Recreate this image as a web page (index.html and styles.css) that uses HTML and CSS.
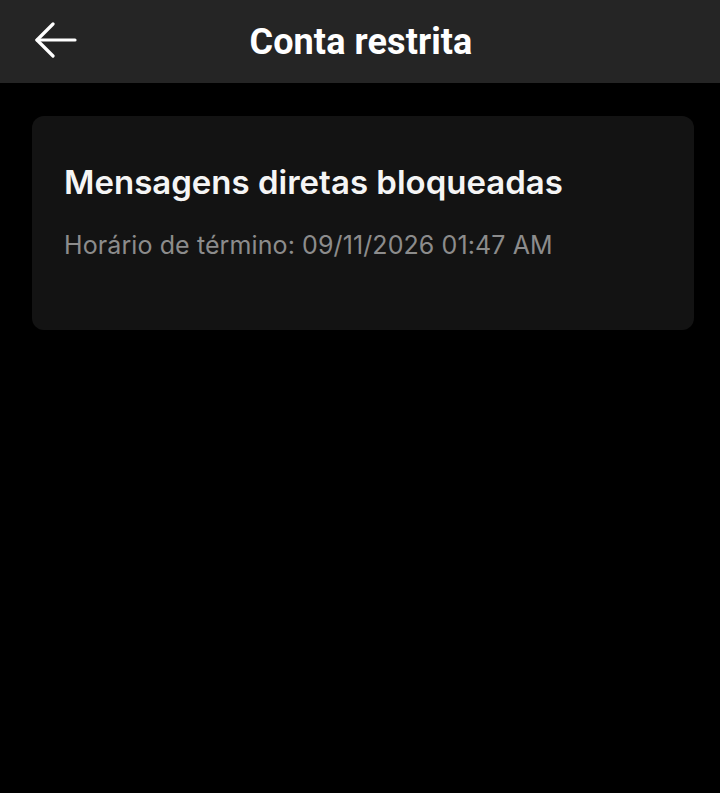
FILE: index.html
```html
<!DOCTYPE html>
<html lang="pt">
<head>
    <meta charset="UTF-8">
    <meta name="viewport" content="width=device-width, initial-scale=1.0">
    <title>Conta restrita</title>
    <link rel="stylesheet" href="styles.css">
</head>
<body>
    <header class="top-bar">
        <button class="back-button" aria-label="Voltar">
            <svg width="44" height="36" viewBox="0 0 44 36" fill="none" stroke="#fff" stroke-width="3.2" stroke-linecap="round" stroke-linejoin="round">
                <path d="M19 2 L3 18 L19 34"/>
                <path d="M3 18 H41"/>
            </svg>
        </button>
        <h1>Conta restrita</h1>
    </header>

    <main class="content">
        <div class="restriction-card">
            <h2>Mensagens diretas bloqueadas</h2>
            <p class="end-time">Horário de término: 09/11/2026 01:47 AM</p>
        </div>
    </main>
</body>
</html>
```

FILE: styles.css
```css
body {
    margin: 0;
    background-color: #000;
    font-family: Inter, "Noto Sans", sans-serif;
    color: #fff;
    height: 793px;
}

.top-bar {
    background-color: #252525;
    height: 83px;
    display: flex;
    align-items: center;
    justify-content: center;
    position: relative;
}

.back-button {
    position: absolute;
    left: 34px;
    top: 22px;
    background: none;
    border: none;
    padding: 0;
    display: flex;
}

.top-bar h1 {
    margin: 0 0 0 2px;
    font-family: Roboto, sans-serif;
    font-size: 36px;
    font-weight: 700;
    letter-spacing: 0.1px;
}

.content {
    padding: 33px 26px 0 32px;
}

.restriction-card {
    box-sizing: border-box;
    background-color: #131313;
    border-radius: 12px;
    padding: 46px 32px 0;
    height: 214px;
}

.restriction-card h2 {
    margin: 0;
    font-size: 33px;
    font-weight: 600;
    color: #f5f5f5;
    letter-spacing: 0;
}

.end-time {
    margin: 28px 0 0;
    font-size: 25px;
    color: #8c8c8c;
    letter-spacing: 0.1px;
}
```
